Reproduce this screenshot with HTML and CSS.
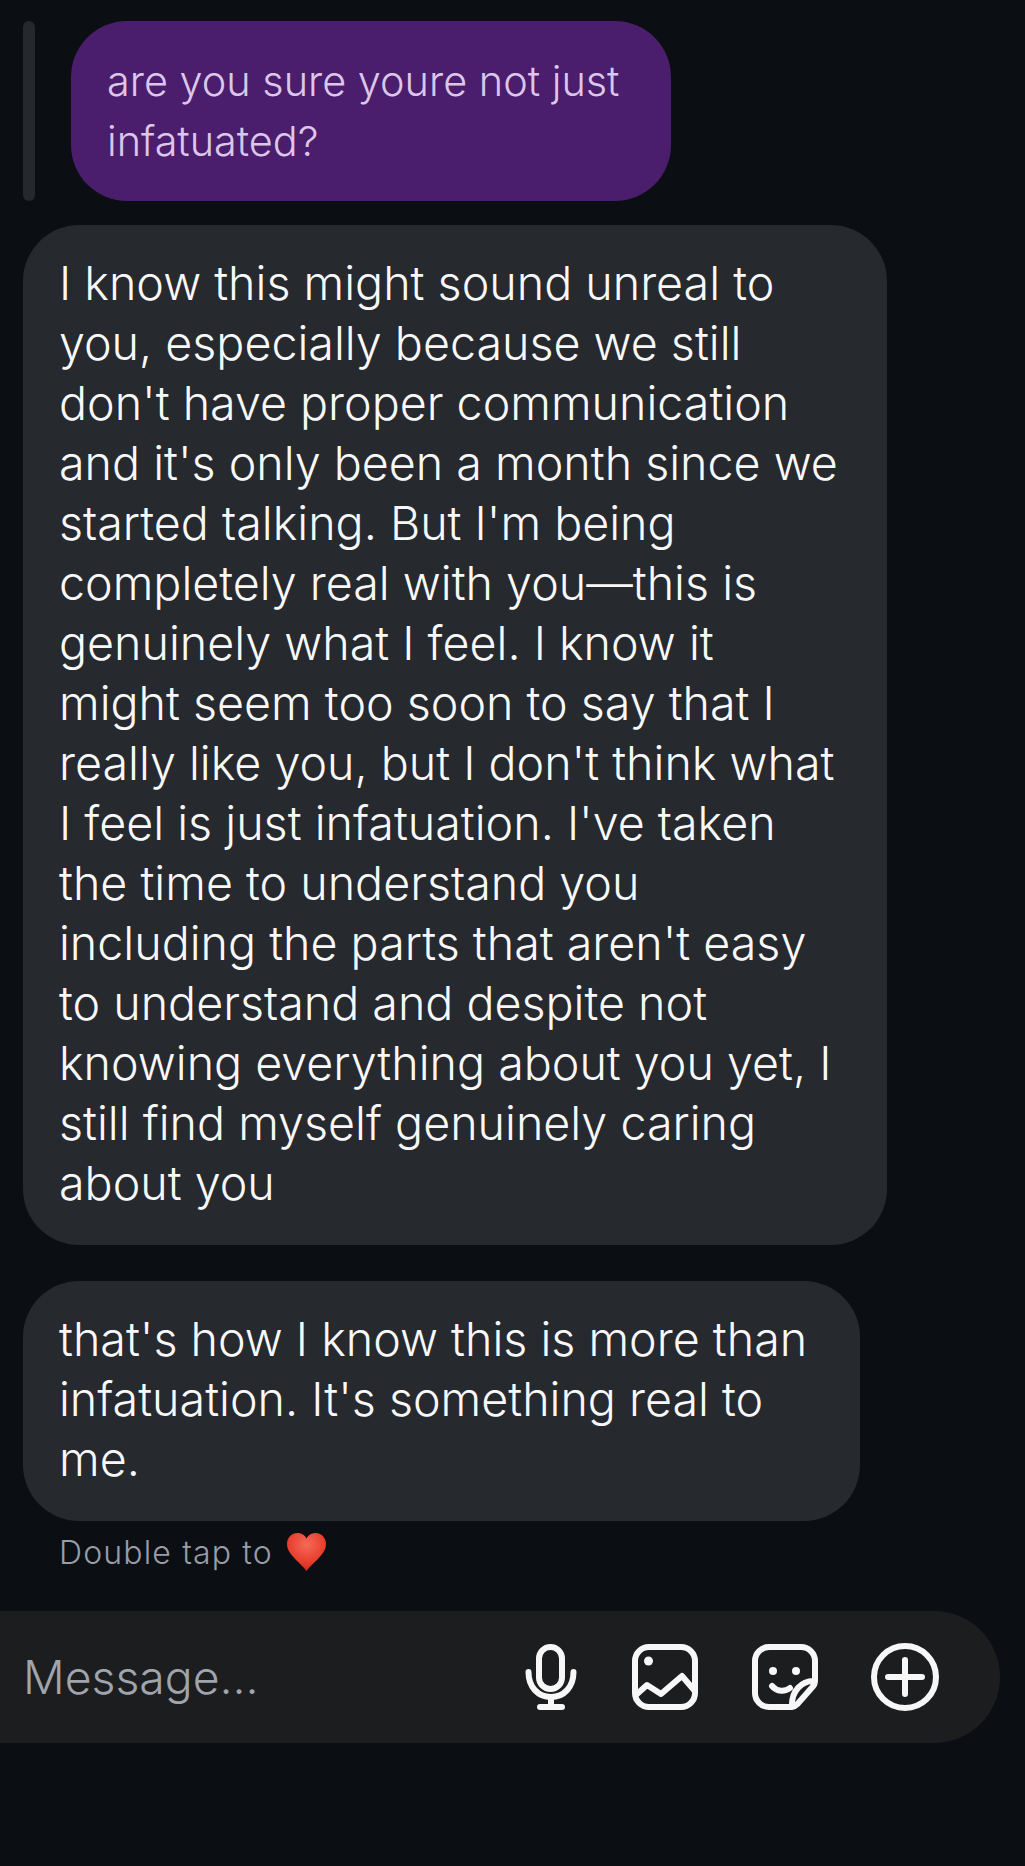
FILE: index.html
```html
<!DOCTYPE html>
<html lang="en">
<head>
<meta charset="utf-8">
<title>Message thread</title>
<link rel="stylesheet" href="styles.css">
</head>
<body>
<main class="thread">
  <div class="reply-row">
    <div class="reply-bar"></div>
    <div class="bubble bubble-reply">are you sure youre not just<br>infatuated?</div>
  </div>
  <div class="bubble bubble-long">I know this might sound unreal to<br>you, especially because we still<br>don't have proper communication<br>and it's only been a month since we<br>started talking. But I'm being<br>completely real with you—this is<br>genuinely what I feel. I know it<br>might seem too soon to say that I<br>really like you, but I don't think what<br>I feel is just infatuation. I've taken<br>the time to understand you<br>including the parts that aren't easy<br>to understand and despite not<br>knowing everything about you yet, I<br>still find myself genuinely caring<br>about you</div>
  <div class="bubble bubble-short">that's how I know this is more than<br>infatuation. It's something real to<br>me.</div>
  <div class="hint">
    <span>Double tap to</span>
    <svg class="heart" viewBox="0 0 39 38" aria-hidden="true">
      <defs>
        <radialGradient id="heartFill" cx="0.5" cy="0.3" r="0.75">
          <stop offset="0" stop-color="#f66a58"/>
          <stop offset="0.6" stop-color="#e8402f"/>
          <stop offset="1" stop-color="#c9281c"/>
        </radialGradient>
      </defs>
      <path fill="url(#heartFill)" d="M19.5 38C17 34 10 28.500 5 22.500 1.500 18.300 0 15 0 11 0 4.500 4.800 0 10.500 0 14.500 0 17.800 2.200 19.500 5.500 21.200 2.200 24.500 0 28.500 0 34.200 0 39 4.500 39 11 39 15 37.500 18.300 34 22.500 29 28.500 22 34 19.500 38Z"/>
    </svg>
  </div>
  <div class="composer">
    <span class="placeholder">Message...</span>
    <div class="tools">
      <svg class="icon icon-mic" viewBox="0 0 52 66" aria-hidden="true">
        <rect x="14" y="3" width="23" height="42" rx="11.500"/>
        <path d="M3.500 28C3.500 43 13 53 26 53S48.500 43 48.500 28M26 53V63M15 63H37"/>
      </svg>
      <svg class="icon icon-square" viewBox="0 0 66 66" aria-hidden="true">
        <rect x="3" y="3" width="60" height="60" rx="14"/>
        <circle class="dot" cx="16.500" cy="17" r="4.500"/>
        <path d="M5 50L15 41L29 50L50 32L62 46"/>
      </svg>
      <svg class="icon icon-square" viewBox="0 0 66 66" aria-hidden="true">
        <path d="M63 37V17A14 14 0 0 0 49 3H17A14 14 0 0 0 3 17V49A14 14 0 0 0 17 63H40C42 63 43.500 62 45 60.500L60 43.500C62 41.500 63 40 63 37ZM63 37C50 36 39 47 40 63"/>
        <circle class="dot" cx="21" cy="27" r="4"/>
        <circle class="dot" cx="44" cy="27" r="4"/>
        <path d="M20 42C25 48 33 48 38 44"/>
      </svg>
      <svg class="icon icon-plus" viewBox="0 0 68 68" aria-hidden="true">
        <circle cx="34" cy="34" r="31"/>
        <path d="M17 34H51M34 17V51"/>
      </svg>
    </div>
  </div>
</main>
</body>
</html>
```
FILE: styles.css
```css
html, body {
  margin: 0;
  background: #0b0e13;
}

.thread {
  display: flex;
  flex-direction: column;
  align-items: flex-start;
  width: 1025px;
  height: 1866px;
  box-sizing: border-box;
  padding-top: 21px;
  font-family: Inter, "Liberation Sans", sans-serif;
  overflow: hidden;
}

.reply-row {
  display: flex;
  gap: 36px;
  margin-left: 23px;
}

.reply-bar {
  width: 12px;
  border-radius: 6px;
  background: #25282d;
}

.bubble {
  box-sizing: border-box;
  padding: 28px 36px 32px;
  font-size: 46.6px;
  font-weight: 350;
  line-height: 60px;
  white-space: nowrap;
  color: #f8f8f9;
  background: #26292e;
  border-radius: 56px;
}

.bubble-reply {
  width: 600px;
  padding-top: 30px;
  padding-bottom: 30px;
  font-size: 41.4px;
  color: #dcc6ea;
  background: #4a1e6c;
}

.bubble-long {
  width: 864px;
  margin: 24px 0 0 23px;
}

.bubble-short {
  width: 837px;
  height: 240px;
  margin: 36px 0 0 23px;
}

.hint {
  display: flex;
  align-items: center;
  gap: 14px;
  height: 38px;
  margin: 12px 0 0 59px;
  font-size: 32px;
  font-weight: 350;
  letter-spacing: 1.15px;
  color: #989da7;
}

.heart {
  width: 39px;
  height: 38px;
}

.composer {
  display: flex;
  align-items: center;
  justify-content: space-between;
  box-sizing: border-box;
  width: 1000px;
  height: 132px;
  margin-top: 40px;
  padding: 0 61px 0 23px;
  background: #1c1d1f;
  border-radius: 0 66px 66px 0;
}

.placeholder {
  font-size: 46.3px;
  font-weight: 350;
  color: #a0a4ad;
}

.tools {
  display: flex;
  align-items: center;
  gap: 54px;
}

.icon {
  fill: none;
  stroke: #f7f7f8;
  stroke-width: 6;
  stroke-linecap: round;
  stroke-linejoin: round;
}

.icon .dot {
  fill: #f7f7f8;
  stroke: none;
}

.icon-mic {
  width: 52px;
  height: 66px;
  margin-right: 1px;
}

.icon-square {
  width: 66px;
  height: 66px;
}

.icon-plus {
  width: 68px;
  height: 68px;
  margin-left: -1px;
}
```
